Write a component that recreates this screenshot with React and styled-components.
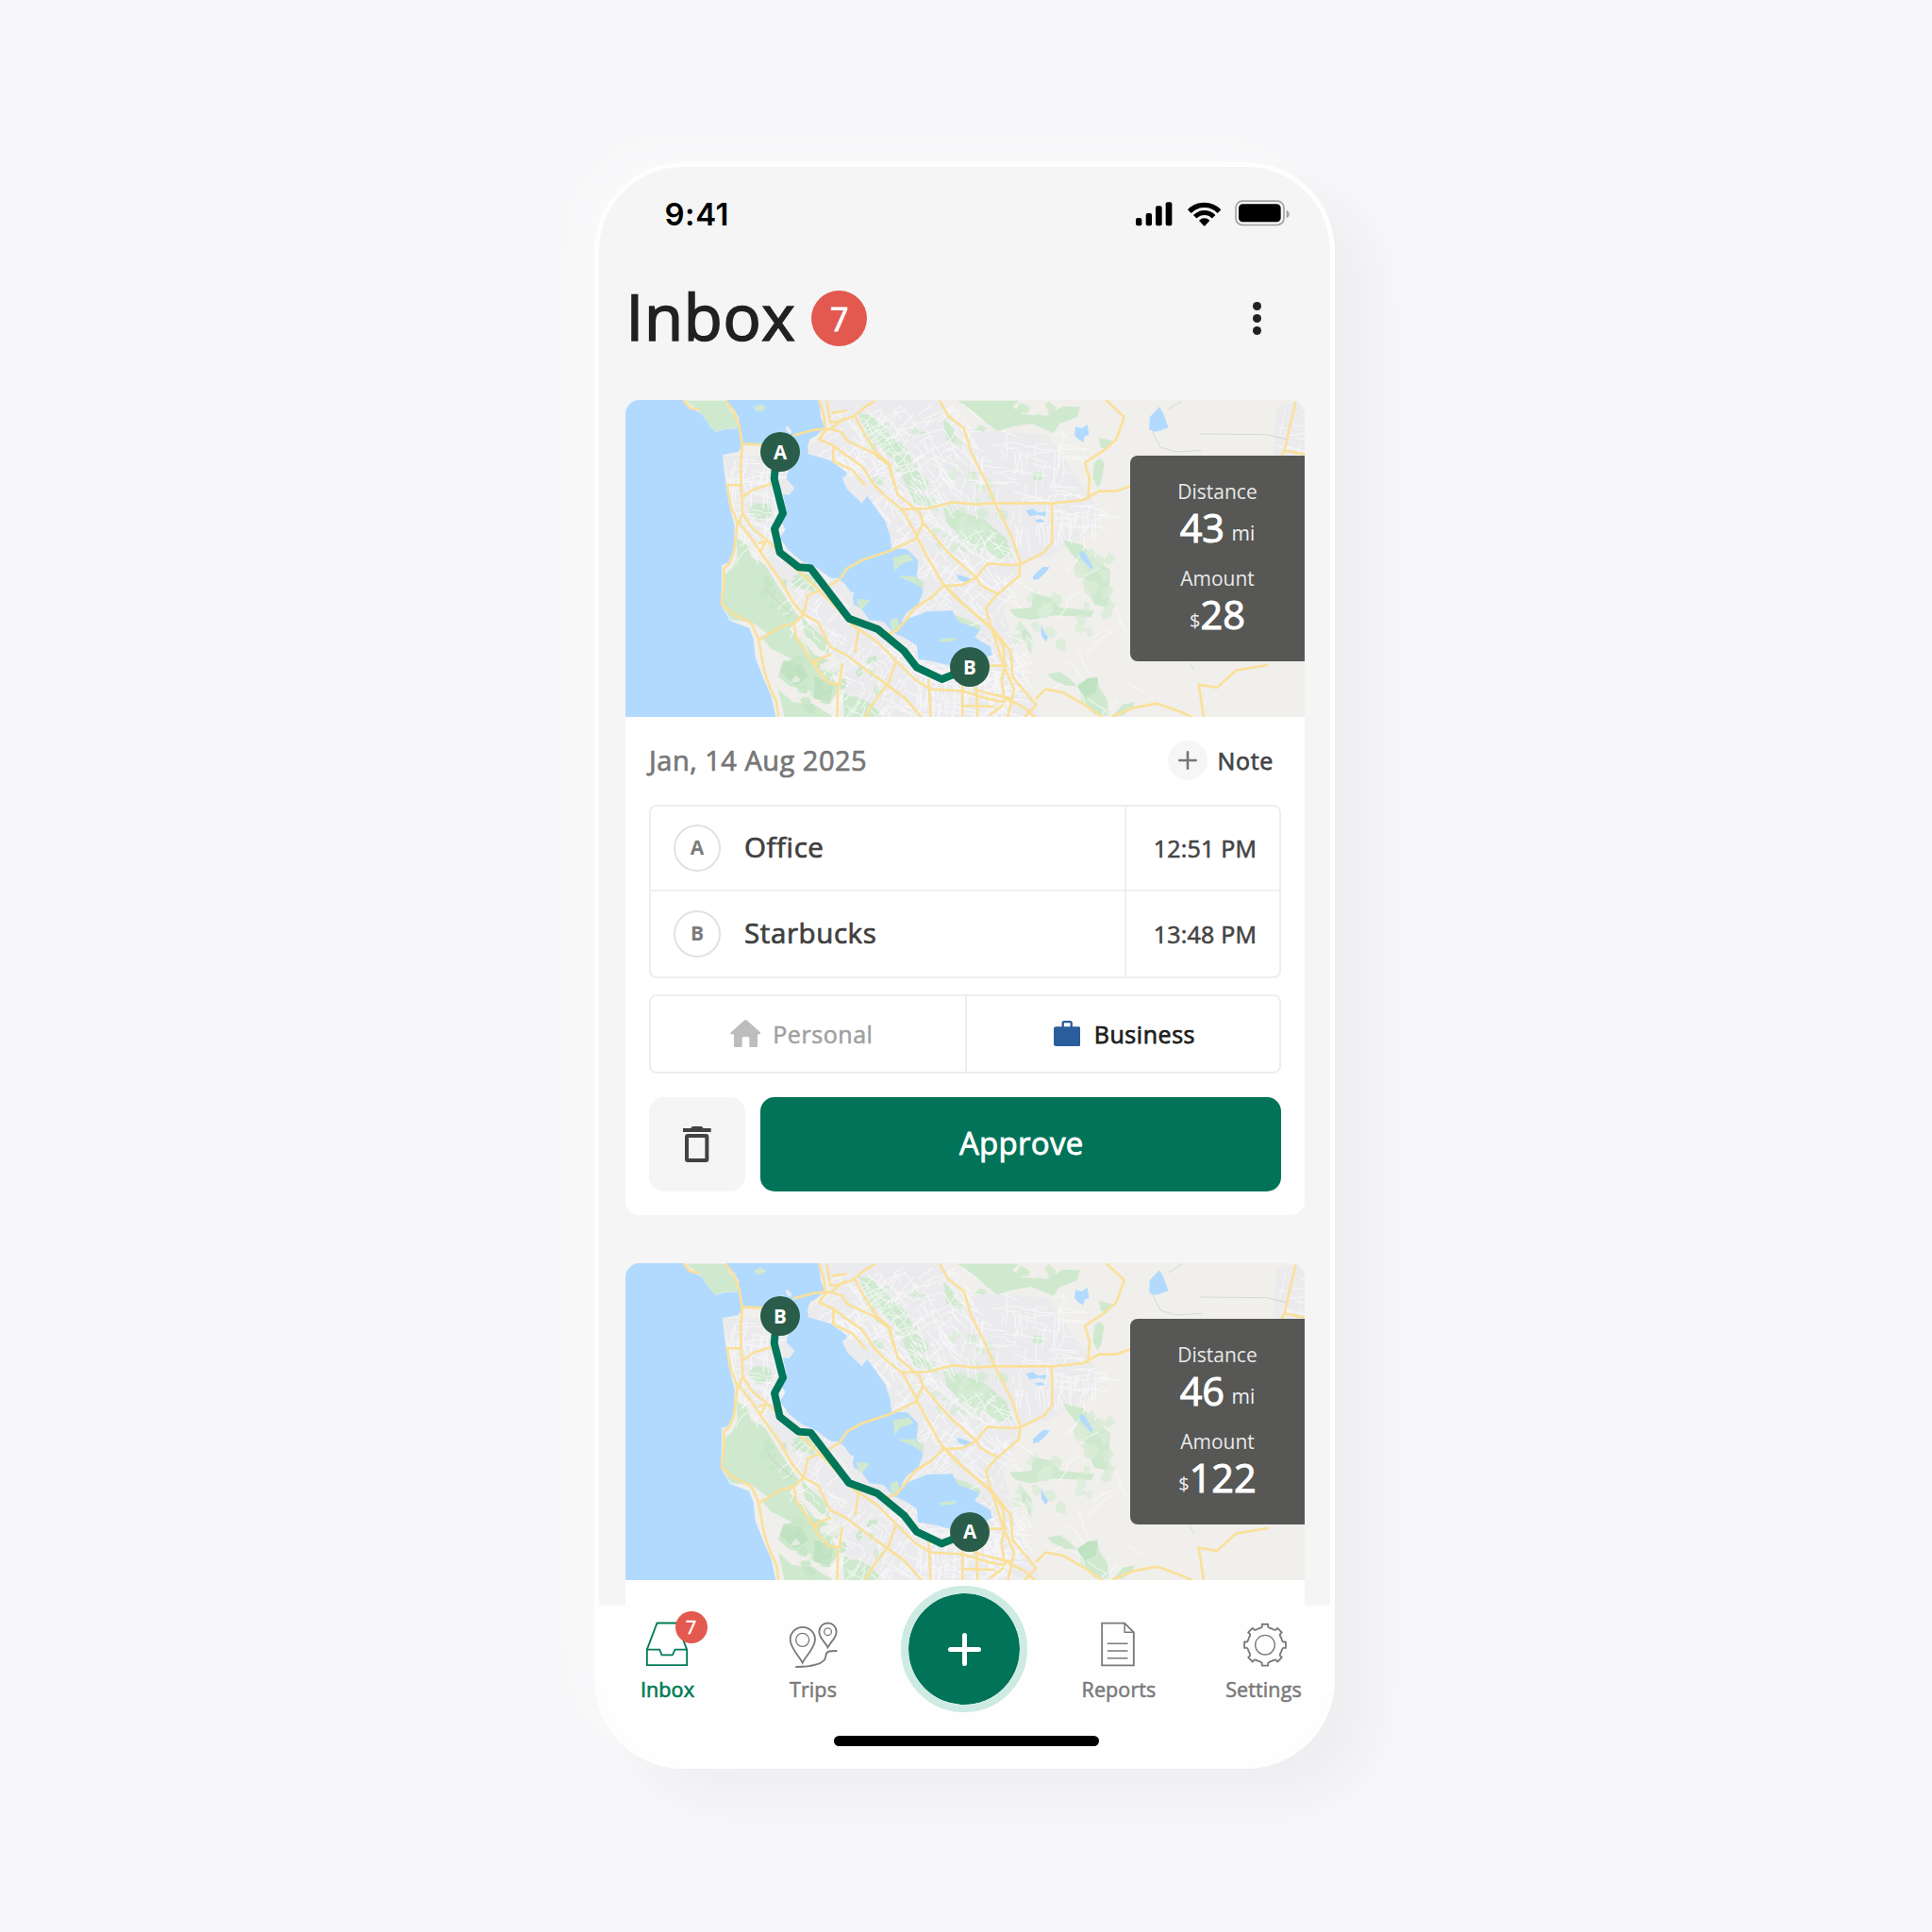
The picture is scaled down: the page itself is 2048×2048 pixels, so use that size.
import React from "react";
import styled, { createGlobalStyle, css } from "styled-components";

const GlobalStyle = createGlobalStyle`
  *, *::before, *::after { box-sizing: border-box; }
  body {
    margin: 0;
    background: #f7f7f9;
    font-family: "Open Sans", "Noto Sans", sans-serif;
    color: #222;
  }
`;

// Open Sans has no installed medium cut: thicken the regular one slightly.
const medium = css`
  font-weight: 400;
  -webkit-text-stroke: ${(p) => p.$bolder || 0.025}em currentColor;
`;

const Page = styled.main`
  width: 2048px;
  height: 2048px;
  padding: 172px 0 0 630px;
  overflow: hidden;
  background: #f7f7f9;
`;

const Phone = styled.div`
  width: 785px;
  height: 1703px;
  border: 5px solid #fefefe;
  border-radius: 94px;
  background: #f5f5f5;
  overflow: hidden;
  display: flex;
  flex-direction: column;
  box-shadow: 42px 32px 50px rgba(40, 40, 60, 0.04), -24px -20px 50px rgba(255, 255, 255, 0.3);
`;

const StatusBar = styled.div`
  height: 100px;
  flex: none;
  display: flex;
  align-items: center;
  justify-content: space-between;
  padding: 0 43px 0 69.5px;
`;

const Clock = styled.span`
  font: 600 33px/40px Inter, sans-serif;
  letter-spacing: 0.5px;
  color: #000;
`;

const StatusIcons = styled.svg`
  width: 162.7px;
  height: 28px;
  margin-bottom: 3px;
`;

const Header = styled.header`
  height: 121px;
  flex: none;
  display: flex;
  align-items: center;
  padding: 0 73px 0 28.5px;
`;

const Title = styled.h1`
  ${medium}
  margin: 0 17px 5px 0;
  font-size: 67px;
  line-height: 80px;
  color: #212121;
  letter-spacing: 0.7px;
`;

const Count = styled.span`
  ${medium}
  display: flex;
  align-items: center;
  justify-content: center;
  width: ${(p) => p.$size}px;
  height: ${(p) => p.$size}px;
  border-radius: 50%;
  background: #e3594f;
  color: #fff;
  font-size: ${(p) => p.$font}px;
  line-height: 1;
`;

const MenuButton = styled.button`
  margin-left: auto;
  padding: 0;
  border: 0;
  background: none;
  display: flex;
  flex-direction: column;
  gap: 3.6px;
`;

const Dot = styled.i`
  width: 9px;
  height: 9px;
  border-radius: 50%;
  background: #222;
`;

const Feed = styled.section`
  flex: 1;
  min-height: 0;
  overflow: hidden;
  padding: 25.5px 27px 0 28px;
  display: flex;
  flex-direction: column;
  gap: 51px;
`;

const Card = styled.article`
  flex: none;
  border-radius: 15px;
  background: #fff;
  overflow: hidden;
`;

const MapArea = styled.div`
  position: relative;
  height: 336px;
  display: flex;
  justify-content: flex-end;
  align-items: flex-start;
  padding-top: 59px;
`;

const MapSvg = styled.svg`
  position: absolute;
  inset: 0;
  width: 720px;
  height: 336px;
`;

const Pin = styled.span`
  position: absolute;
  left: ${(p) => p.$x - 21}px;
  top: ${(p) => p.$y - 21}px;
  width: 42px;
  height: 42px;
  border-radius: 50%;
  display: flex;
  align-items: center;
  justify-content: center;
  background: #2a5d49;
  color: #fff;
  font-size: 20.5px;
  line-height: 1;
  font-weight: 700;
`;

const Stats = styled.div`
  position: relative;
  width: 185px;
  height: 218px;
  padding-top: 24.5px;
  border-radius: 8px 0 0 8px;
  background: #575756;
  color: #fff;
  display: flex;
  flex-direction: column;
  align-items: center;
  gap: 17px;
`;

const Stat = styled.div`
  display: flex;
  flex-direction: column;
  align-items: center;
`;

const StatLabel = styled.span`
  font-size: 21px;
  line-height: 29px;
  color: #e8e8e8;
`;

const StatValue = styled.span`
  ${medium}
  display: flex;
  align-items: baseline;
  height: 46px;
  font-size: 41.5px;
  line-height: 46px;
`;

const Unit = styled.small`
  font-size: ${(p) => p.$size}px;
  font-weight: 400;
  -webkit-text-stroke: 0;
  margin-left: ${(p) => p.$gap || 0}px;
  transform: translateY(-2px);
  color: #f0f0f0;
`;

const Body = styled.div`
  padding: 0 25px 24.5px;
`;

const DateRow = styled.div`
  height: 93px;
  display: flex;
  align-items: center;
  justify-content: space-between;
  padding: 0 8px 0 0;
`;

const DateText = styled.span`
  ${medium}
  font-size: 29px;
  letter-spacing: 0.5px;
  padding-bottom: 2px;
  color: #777;
`;

const NoteButton = styled.button`
  border: 0;
  padding: 0;
  background: none;
  display: flex;
  align-items: center;
  gap: 10px;
  font: 400 25px/34px "Open Sans", sans-serif;
  letter-spacing: 0.7px;
  color: #444;
  -webkit-text-stroke: 0.03em currentColor;
`;

const PlusDisc = styled.span`
  width: 42px;
  height: 42px;
  border-radius: 50%;
  background: #f6f6f6;
  display: grid;
  place-items: center;
`;

const Stops = styled.div`
  border: 2px solid #eeeeee;
  border-radius: 8px;
`;

const Stop = styled.div`
  display: grid;
  grid-template-columns: 1fr 164px;
  height: ${(p) => (p.$first ? 88 : 92)}px;
  & + & { border-top: 2px solid #f0f0f0; }
`;

const Place = styled.div`
  ${medium}
  display: flex;
  align-items: center;
  gap: 25px;
  padding-left: 24px;
  font-size: 29.5px;
  letter-spacing: 0.6px;
  color: #3f3f3f;
`;

const PlaceName = styled.span`
  padding-bottom: 1.5px;
`;

const Letter = styled.span`
  width: 50px;
  height: 50px;
  border: 2.5px solid #e2e2e2;
  border-radius: 50%;
  display: grid;
  place-items: center;
  font-size: 21px;
  line-height: 1;
  font-weight: 700;
  letter-spacing: 0;
  -webkit-text-stroke: 0;
  color: #7c7c7c;
`;

const Time = styled.div`
  ${medium}
  border-left: 2px solid #efefef;
  display: flex;
  align-items: center;
  justify-content: center;
  padding-left: 5px;
  font-size: 25px;
  letter-spacing: 0.2px;
  color: #444;
`;

const Segment = styled.div`
  margin: 17px 0 25px;
  height: 84px;
  border: 2px solid #eeeeee;
  border-radius: 8px;
  display: grid;
  grid-template-columns: 333px 1fr;
`;

const Option = styled.button`
  border: 0;
  padding: ${(p) => (p.$active ? "0 0 0 3px" : "0 14px 0 0")};
  background: none;
  display: flex;
  align-items: center;
  justify-content: center;
  gap: ${(p) => (p.$active ? 14.5 : 13)}px;
  font: 400 25px/34px "Open Sans", sans-serif;
  letter-spacing: 0.55px;
  -webkit-text-stroke: ${(p) => (p.$active ? 0.03 : 0.022)}em currentColor;
  color: ${(p) => (p.$active ? "#1d1d1d" : "#a0a0a0")};
  & + & { border-left: 2px solid #efefef; }
`;

const Actions = styled.div`
  display: flex;
  gap: 16px;
`;

const TrashButton = styled.button`
  width: 101.5px;
  height: 100.5px;
  border: 0;
  border-radius: 16px;
  background: #f5f5f5;
  display: grid;
  place-items: center;
`;

const ApproveButton = styled.button`
  flex: 1;
  border: 0;
  border-radius: 15px;
  background: #007358;
  color: #fff;
  font: 400 33px/44px "Open Sans", sans-serif;
  letter-spacing: 0.3px;
  padding: 0 4px 1px 6px;
  -webkit-text-stroke: 0.025em currentColor;
`;

const TabBar = styled.nav`
  position: relative;
  flex: none;
  height: 168px;
  background: #fefefe;
`;

const Tabs = styled.div`
  display: grid;
  grid-template-columns: 145px 164px 156px 172px 135px;
  height: 138px;
`;

const Tab = styled.a`
  ${medium}
  display: flex;
  flex-direction: column;
  align-items: center;
  padding-top: 17px;
  gap: 9px;
  font-size: 21.5px;
  line-height: 29px;
  letter-spacing: 0.1px;
  color: ${(p) => (p.$active ? "#007a58" : "#7a7a7a")};
`;

const TabIcon = styled.span`
  position: relative;
  height: 48px;
  margin-right: ${(p) => p.$shift || 0}px;
  svg { display: block; }
`;

const TabCount = styled.span`
  position: absolute;
  left: 33px;
  top: -11.5px;
`;

const AddButton = styled.button`
  justify-self: center;
  width: 134px;
  height: 134px;
  margin-top: -21px;
  padding: 0;
  border: 8px solid #cdebe3;
  border-radius: 50%;
  background: #007358;
  background-clip: padding-box;
  display: grid;
  place-items: center;
`;

const HomeIndicator = styled.div`
  width: 281px;
  height: 11px;
  margin-left: 248.5px;
  border-radius: 6px;
  background: #000;
`;

/* Bay Area base map ------------------------------------------------ */

const WATER = [
  "39,40 225,40 232,52 260,72 282,84 306,122 325,142 355,134 395,130 400,98 385,70 365,52 360,40 655,40 660,95 672,128 650,150 625,165 618,190 620,212 690,232 745,272 730,292 745,325 790,368 808,345 830,375 865,425 880,470 885,512 935,515 970,550 965,600 985,650 970,690 935,715 915,745 1000,712 1078,710 1098,745 1165,770 1150,795 1200,825 1205,850 1150,880 1075,885 1000,868 970,865 965,820 925,795 890,780 860,745 815,740 790,705 765,690 760,655 735,625 690,605 645,572 600,552 560,520 530,480 548,450 535,430 552,395 540,340 560,342 577,320 550,290 560,260 590,225 585,180 540,142 500,160 470,182 412,180 398,205 348,215 356,290 368,370 386,440 384,520 365,558 345,565 345,620 342,690 372,742 432,765 446,800 452,860 480,930 502,980 517,1048 39,1048",
  "1737,62 1750,85 1766,128 1750,133 1738,138 1722,141 1705,134 1706,95",
  "1470,125 1490,130 1508,118 1513,150 1500,155 1495,174 1480,165 1467,152",
  "1335,600 1350,585 1368,570 1388,572 1375,590 1352,610 1335,612",
  "1485,520 1500,525 1526,570 1520,580 1495,550 1483,535",
  "1360,755 1370,775 1384,795 1375,808 1362,790",
  "1312,392 1335,386 1350,398 1378,395 1375,410 1350,405 1325,410",
  "1090,595 1115,600 1140,610 1125,622 1100,612",
  "1340,422 1360,418 1375,428 1350,430",
];

const GREEN = [
  "232,42 358,42 372,75 392,92 396,128 355,132 325,142 306,122 282,84",
  "432,388 450,368 495,370 508,400 490,418 460,425 440,412",
  "392,478 425,500 440,540 480,560 530,640 590,730 560,770 500,790 440,745 375,740 345,690 350,600 380,575 395,540",
  "470,790 560,770 600,800 640,850 690,870 640,880 560,860 500,830",
  "540,870 610,855 680,900 720,960 690,1000 640,990 600,960 560,950 525,920",
  "525,960 570,1000 640,1010 700,1048 545,1048",
  "730,970 780,985 830,1010 860,1048 735,1048",
  "600,730 640,770 675,800 690,850 650,830 610,790",
  "778,80 820,90 880,150 930,190 960,260 1005,300 990,330 930,310 900,240 860,200 820,170 795,120",
  "930,310 1000,350 1010,380 960,370",
  "890,540 940,530 960,555 920,580 892,575",
  "960,600 990,620 980,670 960,640",
  "1050,380 1110,395 1180,420 1250,480 1270,540 1230,545 1170,510 1110,480 1060,430",
  "1095,42 1290,42 1270,62 1300,85 1380,90 1430,60 1485,62 1475,95 1420,115 1400,145 1330,115 1270,125 1220,140 1150,80",
  "1050,100 1075,120 1100,178 1060,170",
  "1335,272 1358,268 1370,290 1350,298 1335,292",
  "1530,238 1548,226 1562,240 1552,300 1540,318 1526,290",
  "1545,160 1588,170 1570,200 1550,190",
  "1430,485 1490,500 1540,550 1580,580 1575,700 1530,690 1500,620 1495,570 1450,520",
  "1335,655 1400,670 1420,700 1530,710 1520,730 1400,725 1330,740 1280,730 1260,705 1330,700",
  "1290,740 1330,790 1330,850 1300,800",
  "1380,912 1420,905 1450,925 1475,950 1440,948 1400,932",
  "1480,945 1510,925 1540,920 1545,955 1570,990 1578,1045 1530,1040 1490,1000",
  "1590,1044 1620,1008 1660,1000 1650,1020 1620,1044",
  "1070,720 1120,735 1170,760 1160,785 1110,760",
  "775,670 815,680 790,705 778,695",
  "600,590 650,600 640,650 600,640 570,600",
  "1130,265 1155,270 1150,290 1130,290",
];

const URBAN = [
  "655,40 1040,40 1120,150 1220,380 1300,560 1240,700 1290,900 1360,1048 760,1048 700,850 600,700 480,540 400,440 350,215 590,220 620,190 700,140",
  "1050,130 1380,150 1450,250 1540,380 1540,450 1380,540 1290,560 1210,370",
  "2110,60 2199,40 2199,250 2100,210",
];

const DARK_GREEN = [
  "545,870 600,880 620,920 580,950 530,905",
  "640,920 700,940 690,1000 640,990",
  "1475,950 1510,925 1540,925 1535,970 1500,985",
];

const ROADS = [
  "360,45 385,80 400,120 410,180 405,250 408,330 412,400 400,430 440,480 480,540 530,610 570,680 605,722 650,745 670,785 690,825 740,850 800,895 870,945 930,990 980,1048",
  "225,42 245,66 270,70",
  "410,180 470,182 500,200",
  "362,310 375,380 395,430 385,520 370,560 352,575 352,620 345,690 380,720 440,750 462,800 480,900 500,960 520,1000 525,1048",
  "362,310 400,312",
  "410,350 445,325 500,308",
  "412,400 440,445 500,495 560,560 620,610 690,680 760,755 840,810 900,870 960,930 1010,960 1110,965 1190,990",
  "470,520 485,490 465,495",
  "575,152 640,135 690,132 725,142 745,170 830,210 875,245 890,290 905,340 940,370 975,400 985,430 965,475 1000,540 1045,620 1090,670 1150,720 1205,770 1240,880 1275,960 1255,1048",
  "655,42 670,90 675,135 655,165 700,185 740,215 790,250 830,310 870,350 920,390 965,470",
  "680,45 690,110 715,110 765,92 800,62 830,45",
  "695,130 735,98",
  "770,95 800,150 840,210 880,245 890,300",
  "700,185 700,235 760,262 800,310",
  "700,80 740,75",
  "1050,625 1120,695 1205,765 1265,840 1270,920 1345,1010 1310,1048",
  "915,388 1000,385 1080,365 1150,372 1210,368 1400,368 1495,358 1545,330 1600,330 1640,315",
  "1040,45 1065,90 1115,130 1140,210 1190,310 1215,370 1270,480 1295,560 1290,600 1215,665 1185,700 1200,760 1240,820 1245,885 1235,930 1245,1000",
  "965,480 880,520 790,550 745,575 720,610 690,630",
  "1050,630 1010,670 960,700 930,740 900,775 870,785",
  "1050,632 1110,628 1155,605 1190,560 1260,565 1295,562 1370,525 1397,490 1395,370",
  "985,430 1010,460 1070,530 1155,605",
  "1155,605 1170,630 1220,655",
  "470,800 530,762 575,750 605,722 620,660 660,645",
  "575,750 582,795 620,850 650,900 685,940 720,945 728,880",
  "715,945 712,1048",
  "650,882 640,870 690,850",
  "780,770 770,840",
  "900,870 875,940 830,1000 800,1048",
  "1003,930 1010,1048",
  "1112,950 1110,1048",
  "1155,955 1158,1048",
  "1110,1012 1210,1015",
  "1195,885 1250,885",
  "1190,990 1240,1000 1250,990 1270,1000 1310,1020 1340,1048",
  "1150,960 1200,975 1265,990",
  "1200,1040 1240,1010",
  "1570,42 1625,95 1600,165 1560,200 1500,240 1515,290 1510,355",
  "2170,48 2150,130 2135,200 2199,213",
  "2080,883 1980,900 1920,955 1862,945 1878,1048",
  "1345,990 1375,960 1430,970 1500,1010 1555,1048",
  "1590,1045 1650,1020 1730,1005 1800,1030 1840,1048",
  "2135,200 2120,230",
];

const STREAMS = [
  "480,628 510,670 570,720",
  "1715,140 1740,190 1790,205 1870,200",
  "1765,70 1810,42",
  "1865,148 2080,150 2140,165",
  "1830,875 1850,900",
  "1175,785 1200,810",
];

// Stable pseudo-random source so the side streets are identical on every render.
const makeRandom = (seed) => () => {
  seed = (seed * 16807) % 2147483647;
  return seed / 2147483647;
};

const buildStreets = () => {
  const rnd = makeRandom(4217);
  let d = "";
  const zone = (x0, y0, x1, y1, n, tilt, len) => {
    for (let i = 0; i < n; i++) {
      let x = x0 + rnd() * (x1 - x0);
      let y = y0 + rnd() * (y1 - y0);
      const a = tilt + (rnd() > 0.5 ? Math.PI / 2 : 0);
      d += `M${x.toFixed(0)} ${y.toFixed(0)}`;
      const steps = 2 + Math.floor(rnd() * 3);
      for (let s = 0; s < steps; s++) {
        const b = a + (rnd() - 0.5) * 0.7;
        x += Math.cos(b) * len * (0.5 + rnd());
        y += Math.sin(b) * len * (0.5 + rnd());
        d += `L${x.toFixed(0)} ${y.toFixed(0)}`;
      }
    }
  };
  zone(370, 215, 540, 440, 60, 0.05, 20);
  zone(420, 430, 560, 560, 22, 0.8, 16);
  zone(560, 590, 760, 800, 45, 0.75, 18);
  zone(700, 780, 1000, 1030, 95, 0.6, 20);
  zone(960, 880, 1270, 1040, 130, 0.05, 20);
  zone(700, 60, 960, 260, 90, 0.9, 20);
  zone(820, 250, 1060, 480, 80, 0.9, 20);
  zone(980, 450, 1280, 700, 95, 0.8, 20);
  zone(930, 50, 1120, 300, 45, 0.9, 26);
  zone(1110, 130, 1440, 360, 65, 0.1, 26);
  zone(1270, 380, 1540, 460, 55, 0.05, 20);
  zone(1180, 720, 1320, 1030, 50, 0.9, 16);
  zone(2100, 60, 2190, 200, 12, 0.1, 16);
  zone(1400, 500, 1640, 1000, 14, 0.9, 30);
  return d;
};

const STREETS = buildStreets();

const buildPatches = () => {
  const rnd = makeRandom(911);
  const out = [];
  const zone = (x0, y0, x1, y1, n, r, tone) => {
    for (let i = 0; i < n; i++) {
      const cx = x0 + rnd() * (x1 - x0);
      const cy = y0 + rnd() * (y1 - y0);
      const pts = [];
      for (let k = 0; k < 7; k++) {
        const a = (k / 7) * Math.PI * 2;
        const q = r * (0.4 + rnd());
        pts.push(`${(cx + Math.cos(a) * q).toFixed(0)},${(cy + Math.sin(a) * q).toFixed(0)}`);
      }
      out.push({ points: pts.join(" "), tone });
    }
  };
  zone(1110, 390, 1260, 530, 14, 18, "#d6ebd4");
  zone(1450, 520, 1590, 720, 16, 20, "#d9ebd6");
  zone(1270, 650, 1540, 860, 16, 18, "#dbecd8");
  zone(800, 110, 1000, 320, 16, 14, "#d2e9d1");
  zone(560, 860, 840, 1030, 16, 18, "#c7e5c6");
  zone(580, 880, 780, 1030, 8, 15, "#ecefe9");
  zone(990, 350, 1120, 520, 12, 16, "#d8ebd8");
  zone(1130, 60, 1400, 130, 8, 16, "#cfe8cc");
  zone(1060, 160, 1200, 360, 10, 16, "#dcecd9");
  zone(470, 600, 600, 740, 8, 14, "#c5e5c5");
  return out;
};

const PATCHES = buildPatches();

const ROUTE =
  "515,262 512,290 540,400 513,450 530,525 590,572 628,575 750,735 840,768 925,838 965,890 1045,928 1095,908";

const line = (pts, i) => <polyline key={i} points={pts} />;
const poly = (pts, i) => <polygon key={i} points={pts} />;

function BayMap({ drop }) {
  return (
    <MapSvg viewBox="39 40 2160 1008" preserveAspectRatio="none" aria-hidden="true">
      <rect x="39" y="40" width="2160" height="1008" fill="#f0efec" />
      <g fill="#ebebed">{URBAN.map(poly)}</g>
      <g fill="#cfe9cf">{GREEN.map(poly)}</g>
      <g fill="#bfe2c0">{DARK_GREEN.map(poly)}</g>
      {PATCHES.map((p, i) => (
        <polygon key={i} points={p.points} fill={p.tone} opacity="0.8" />
      ))}
      <path d={STREETS} fill="none" stroke="#fbfbfc" strokeWidth="3.6" opacity="0.7" />
      <g fill="#b2daff">{WATER.map(poly)}</g>
      <g fill="#ebecee">
        <polygon points="548,128 556,124 568,140 562,148 552,140" />
        <polygon points="690,608 712,606 738,625 742,655 720,660 700,640" />
        <polygon points="745,650 766,652 760,680 735,676" />
        <polygon points="728,285 770,280 805,340 792,368 760,335" />
      </g>
      <g fill="#cfe9cf">
        <polygon points="448,62 470,54 488,65 470,76 453,75" />
        <polygon points="775,672 818,676 792,706 778,697" />
        <polygon points="890,540 942,530 955,550 915,562 895,585" />
        <polygon points="880,740 905,732 912,765 885,775" />
        <polygon points="905,600 960,600 985,640 955,622" />
        <polygon points="1035,802 1090,795 1085,806 1045,810" />
      </g>
      <g fill="none" stroke="#a9b8b0" strokeWidth="2" opacity="0.6">
        {STREAMS.map(line)}
      </g>
      <g fill="none" stroke="#fae09a" strokeWidth="8" strokeLinejoin="round" strokeLinecap="round">
        {ROADS.map(line)}
      </g>
      <polyline
        points={ROUTE}
        transform={`translate(0 ${drop * 3})`}
        fill="none"
        stroke="#00775a"
        strokeWidth="24"
        strokeLinejoin="round"
      />
    </MapSvg>
  );
}

function TripMap({ start, end, distance, amount, drop = 0 }) {
  return (
    <MapArea>
      <BayMap drop={drop} />
      <Pin $x={164} $y={55.3 + drop}>{start}</Pin>
      <Pin $x={365} $y={283.7 + drop}>{end}</Pin>
      <Stats>
        <Stat>
          <StatLabel>Distance</StatLabel>
          <StatValue>
            {distance}
            <Unit $size={21} $gap={7.5}>mi</Unit>
          </StatValue>
        </Stat>
        <Stat>
          <StatLabel>Amount</StatLabel>
          <StatValue>
            <Unit $size={20}>$</Unit>
            {amount}
          </StatValue>
        </Stat>
      </Stats>
    </MapArea>
  );
}

/* Icons ------------------------------------------------------------- */

const wifiArc = (r) => {
  const k = Math.sin((46 * Math.PI) / 180) * r;
  const h = Math.cos((46 * Math.PI) / 180) * r;
  return `M${261 - k} ${132 - h}A${r} ${r} 0 0 1 ${261 + k} ${132 - h}`;
};

const SystemIcons = () => (
  <StatusIcons viewBox="43 50 488 84">
    <rect x="43" y="107" width="19" height="25" rx="6" />
    <rect x="75" y="92" width="19" height="40" rx="6" />
    <rect x="106" y="69" width="20" height="63" rx="6" />
    <rect x="138" y="57" width="20" height="75" rx="6" />
    <path d={wifiArc(66)} fill="none" stroke="#000" strokeWidth="16" />
    <path d={wifiArc(41.5)} fill="none" stroke="#000" strokeWidth="15" />
    <path d="M244 115A24 24 0 0 1 278 115L264 131Q261 134 258 131Z" />
    <rect x="361" y="53.500" width="153" height="76" rx="21" fill="none" stroke="#a3a3a3" strokeWidth="5" />
    <rect x="370" y="63" width="134" height="57" rx="13" />
    <path d="M522 82Q531 86 531 95T522 108Z" fill="#a3a3a3" />
  </StatusIcons>
);

const Plus = ({ size, stroke, color }) => (
  <svg width={size} height={size} viewBox={`0 0 ${size} ${size}`}>
    <path
      d={`M${size / 2} ${stroke / 2}V${size - stroke / 2}M${stroke / 2} ${size / 2}H${size - stroke / 2}`}
      stroke={color}
      strokeWidth={stroke}
      strokeLinecap="round"
    />
  </svg>
);

const HomeIcon = () => (
  <svg width="32.7" height="29.3" viewBox="278 60 98 88" fill="#bdbdbd">
    <path d="M323 61.500Q327 58.500 331 61.500L375 101Q377 105 373 105.500H365V142Q365 148 359 148H344Q339 148 339 143V119Q339 114 334 114H321Q316 114 316 119V143Q316 148 311 148H296Q290 148 290 142V105.500H281Q277 105 279 101Z" />
  </svg>
);

const CaseIcon = () => (
  <svg width="28.400" height="27" viewBox="1311 62.500 85 81">
    <rect x="1311" y="81" width="85" height="62.500" rx="7" fill="#2a5d9b" />
    <path d="M1340 84V70Q1340 66 1344 66H1363Q1367 66 1367 70V84" fill="none" stroke="#2a5d9b" strokeWidth="7" />
  </svg>
);

const TrashIcon = () => (
  <svg width="29.700" height="38" viewBox="132 402 89 114">
    <path d="M132 408H156L162 402H191L197 408H221V420H132Z" fill="#424242" />
    <rect x="144" y="432" width="64" height="78" rx="3" fill="none" stroke="#424242" strokeWidth="12" />
  </svg>
);

const InboxIcon = () => (
  <svg width="48" height="48" viewBox="219.500 177 144 144" fill="none" stroke="#007a58" strokeWidth="5.500">
    <path d="M228 266L260 181.500H323L355 266V315.500H228ZM228 266H268L275 283H309L317 266H355" />
  </svg>
);

const TripsIcon = () => (
  <svg width="52" height="49" viewBox="679 174 156 147" fill="none" stroke="#7a7a7a" strokeWidth="5.500">
    <path d="M723 305C712 282 684 258 684 231A39.500 39.500 0 0 1 763 231C763 258 734 282 723 305Z" />
    <circle cx="723" cy="232" r="21" strokeWidth="4" />
    <path d="M803.500 256C796 240 776 226 776 206A27.500 27.500 0 0 1 831 206C831 226 811 240 803.500 256Z" />
    <circle cx="803.500" cy="206" r="11.500" strokeWidth="4" />
    <path d="M703 318C750 318 796 309 797 284C798 268 806 267 831 267" strokeLinecap="round" strokeWidth="5.500" />
  </svg>
);

const ReportsIcon = () => (
  <svg width="36" height="48" viewBox="469.500 180 108 144" fill="none" stroke="#7a7a7a" strokeWidth="5.500">
    <path d="M473 185H545L574 214V319H473Z" />
    <path d="M545 185V214H574" strokeWidth="4.500" />
    <path d="M490 250H555M490 273H555M490 296H555" strokeWidth="4.500" />
  </svg>
);

const gearPath = () => {
  const at = (r, deg) => {
    const a = (deg * Math.PI) / 180;
    return `${(Math.sin(a) * r).toFixed(1)} ${(-Math.cos(a) * r).toFixed(1)}`;
  };
  let d = "";
  for (let i = 0; i < 8; i++) {
    const c = i * 45;
    d += `${i ? "L" : "M"}${at(58, c - 9.5)}L${at(66.5, c - 8.5)}L${at(66.5, c + 8.5)}L${at(58, c + 9.5)}`;
    d += `L${at(55.5, c + 17)}Q${at(57, c + 22.5)} ${at(55.5, c + 28)}`;
  }
  return d + "Z";
};

const GearIcon = () => (
  <svg width="48" height="48" viewBox="-72 -74 144 144" fill="none" stroke="#7a7a7a" strokeWidth="5.500">
    <path d={gearPath()} strokeLinejoin="round" />
    <circle r="31" strokeWidth="4" />
  </svg>
);

export default function App() {
  return (
    <Page>
      <GlobalStyle />
      <Phone>
        <StatusBar>
          <Clock>9:41</Clock>
          <SystemIcons />
        </StatusBar>
        <Header>
          <Title>Inbox</Title>
          <Count $size={59} $font={34}>7</Count>
          <MenuButton aria-label="More">
            <Dot />
            <Dot />
            <Dot />
          </MenuButton>
        </Header>
        <Feed>
          <Card>
            <TripMap start="A" end="B" distance="43" amount="28" />
            <Body>
              <DateRow>
                <DateText>Jan, 14 Aug 2025</DateText>
                <NoteButton>
                  <PlusDisc>
                    <Plus size={20} stroke={2.6} color="#757575" />
                  </PlusDisc>
                  Note
                </NoteButton>
              </DateRow>
              <Stops>
                <Stop $first>
                  <Place>
                    <Letter>A</Letter>
                    <PlaceName>Office</PlaceName>
                  </Place>
                  <Time>12:51 PM</Time>
                </Stop>
                <Stop>
                  <Place>
                    <Letter>B</Letter>
                    <PlaceName>Starbucks</PlaceName>
                  </Place>
                  <Time>13:48 PM</Time>
                </Stop>
              </Stops>
              <Segment>
                <Option>
                  <HomeIcon />
                  Personal
                </Option>
                <Option $active>
                  <CaseIcon />
                  Business
                </Option>
              </Segment>
              <Actions>
                <TrashButton aria-label="Delete">
                  <TrashIcon />
                </TrashButton>
                <ApproveButton>Approve</ApproveButton>
              </Actions>
            </Body>
          </Card>
          <Card>
            <TripMap start="B" end="A" distance="46" amount="122" drop={1.3} />
            <DateRow />
          </Card>
        </Feed>
        <TabBar>
          <Tabs>
            <Tab $active $bolder={0.032}>
              <TabIcon $shift={2}>
                <InboxIcon />
                <TabCount>
                  <Count $size={34} $font={20}>7</Count>
                </TabCount>
              </TabIcon>
              Inbox
            </Tab>
            <Tab>
              <TabIcon>
                <TripsIcon />
              </TabIcon>
              Trips
            </Tab>
            <AddButton aria-label="Add trip">
              <Plus size={35} stroke={5} color="#fff" />
            </AddButton>
            <Tab>
              <TabIcon $shift={3}>
                <ReportsIcon />
              </TabIcon>
              Reports
            </Tab>
            <Tab>
              <TabIcon $shift={-3}>
                <GearIcon />
              </TabIcon>
              Settings
            </Tab>
          </Tabs>
          <HomeIndicator />
        </TabBar>
      </Phone>
    </Page>
  );
}
